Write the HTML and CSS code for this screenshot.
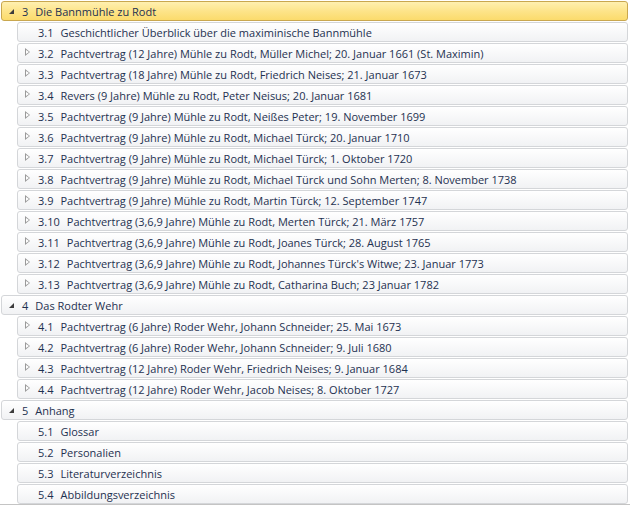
FILE: index.html
```html
<!DOCTYPE html>
<html lang="de">
<head>
    <meta charset="UTF-8">
    <title>Inhaltsverzeichnis</title>
    <link rel="stylesheet" href="styles.css">
</head>
<body>
    <ul class="outline">
        <li class="node level1 open selected"><span class="twisty"></span><span class="num">3</span>Die Bannmühle zu Rodt</li>
        <li class="node level2"><span class="twisty"></span><span class="num">3.1</span>Geschichtlicher Überblick über die maximinische Bannmühle</li>
        <li class="node level2 closed"><span class="twisty"></span><span class="num">3.2</span>Pachtvertrag (12 Jahre) Mühle zu Rodt, Müller Michel; 20. Januar 1661 (St. Maximin)</li>
        <li class="node level2 closed"><span class="twisty"></span><span class="num">3.3</span>Pachtvertrag (18 Jahre) Mühle zu Rodt, Friedrich Neises; 21. Januar 1673</li>
        <li class="node level2 closed"><span class="twisty"></span><span class="num">3.4</span>Revers (9 Jahre) Mühle zu Rodt, Peter Neisus; 20. Januar 1681</li>
        <li class="node level2 closed"><span class="twisty"></span><span class="num">3.5</span>Pachtvertrag (9 Jahre) Mühle zu Rodt, Neißes Peter; 19. November 1699</li>
        <li class="node level2 closed"><span class="twisty"></span><span class="num">3.6</span>Pachtvertrag (9 Jahre) Mühle zu Rodt, Michael Türck; 20. Januar 1710</li>
        <li class="node level2 closed"><span class="twisty"></span><span class="num">3.7</span>Pachtvertrag (9 Jahre) Mühle zu Rodt, Michael Türck; 1. Oktober 1720</li>
        <li class="node level2 closed"><span class="twisty"></span><span class="num">3.8</span>Pachtvertrag (9 Jahre) Mühle zu Rodt, Michael Türck und Sohn Merten; 8. November 1738</li>
        <li class="node level2 closed"><span class="twisty"></span><span class="num">3.9</span>Pachtvertrag (9 Jahre) Mühle zu Rodt, Martin Türck; 12. September 1747</li>
        <li class="node level2 closed"><span class="twisty"></span><span class="num">3.10</span>Pachtvertrag (3,6,9 Jahre) Mühle zu Rodt, Merten Türck; 21. März 1757</li>
        <li class="node level2 closed"><span class="twisty"></span><span class="num">3.11</span>Pachtvertrag (3,6,9 Jahre) Mühle zu Rodt, Joanes Türck; 28. August 1765</li>
        <li class="node level2 closed"><span class="twisty"></span><span class="num">3.12</span>Pachtvertrag (3,6,9 Jahre) Mühle zu Rodt, Johannes Türck's Witwe; 23. Januar 1773</li>
        <li class="node level2 closed"><span class="twisty"></span><span class="num">3.13</span>Pachtvertrag (3,6,9 Jahre) Mühle zu Rodt, Catharina Buch; 23 Januar 1782</li>
        <li class="node level1 open"><span class="twisty"></span><span class="num">4</span>Das Rodter Wehr</li>
        <li class="node level2 closed"><span class="twisty"></span><span class="num">4.1</span>Pachtvertrag (6 Jahre) Roder Wehr, Johann Schneider; 25. Mai 1673</li>
        <li class="node level2 closed"><span class="twisty"></span><span class="num">4.2</span>Pachtvertrag (6 Jahre) Roder Wehr, Johann Schneider; 9. Juli 1680</li>
        <li class="node level2 closed"><span class="twisty"></span><span class="num">4.3</span>Pachtvertrag (12 Jahre) Roder Wehr, Friedrich Neises; 9. Januar 1684</li>
        <li class="node level2 closed"><span class="twisty"></span><span class="num">4.4</span>Pachtvertrag (12 Jahre) Roder Wehr, Jacob Neises; 8. Oktober 1727</li>
        <li class="node level1 open"><span class="twisty"></span><span class="num">5</span>Anhang</li>
        <li class="node level2"><span class="twisty"></span><span class="num">5.1</span>Glossar</li>
        <li class="node level2"><span class="twisty"></span><span class="num">5.2</span>Personalien</li>
        <li class="node level2"><span class="twisty"></span><span class="num">5.3</span>Literaturverzeichnis</li>
        <li class="node level2"><span class="twisty"></span><span class="num">5.4</span>Abbildungsverzeichnis</li>
    </ul>
</body>
</html>
```

FILE: styles.css
```css
body {
    margin: 0;
    background: #ffffff;
    font-family: 'Open Sans', 'Noto Sans', sans-serif;
    font-size: 11px;
    color: #1e3150;
}

.outline {
    list-style: none;
    margin: 0;
    padding: 0 2px 0 1px;
    border-bottom: 1px solid #c4c4c4;
}

.node {
    display: flex;
    align-items: center;
    box-sizing: border-box;
    height: 20px;
    margin-top: 1px;
    border: 1px solid #d4d6d9;
    border-radius: 3px;
    background: linear-gradient(#ffffff, #f1f2f4);
    white-space: nowrap;
}

.level2 {
    margin-left: 16px;
}

.selected {
    border-color: #c9a74f;
    background: linear-gradient(#fff0b0, #fde48a 50%, #fbdb6c);
}

/* expand/collapse arrow */
.twisty {
    width: 20px;
    height: 18px;
    flex: none;
    position: relative;
}

.open .twisty::before {
    content: "";
    position: absolute;
    left: 7px;
    top: 7px;
    width: 0;
    height: 0;
    border-left: 5px solid transparent;
    border-bottom: 5px solid #3c3c3c;
}

.closed .twisty::before {
    content: "";
    position: absolute;
    left: 7px;
    top: 4px;
    width: 5px;
    height: 8px;
    background: #9a9a9a;
    clip-path: polygon(0 0, 100% 50%, 0 100%);
}

.closed .twisty::after {
    content: "";
    position: absolute;
    left: 8px;
    top: 6px;
    width: 3px;
    height: 4px;
    background: #ffffff;
    clip-path: polygon(0 0, 100% 50%, 0 100%);
}

.num {
    margin-right: 7px;
}
```
